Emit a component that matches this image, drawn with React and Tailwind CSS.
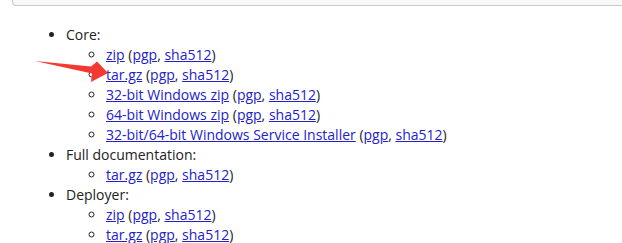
import React from 'react';

const core = [
    { label: 'zip' },
    { label: 'tar.gz' },
    { label: '32-bit Windows zip' },
    { label: '64-bit Windows zip' },
    { label: '32-bit/64-bit Windows Service Installer' },
];

const sections = [
    { title: 'Core:', items: core },
    { title: 'Full documentation:', items: [{ label: 'tar.gz' }] },
    { title: 'Deployer:', items: [{ label: 'zip' }, { label: 'tar.gz' }] },
];

function Download({ label }) {
    return (
        <li className="leading-[20px]">
            <a href="#" className="text-[#2222c8] underline">{label}</a>
            {' ('}
            <a href="#" className="text-[#2222c8] underline">pgp</a>
            {', '}
            <a href="#" className="text-[#2222c8] underline">sha512</a>
            {')'}
        </li>
    );
}

export default function App() {
    return (
        <div className="relative w-[622px] h-[243px] overflow-hidden bg-white text-[#222] text-[14px] font-['Open_Sans',sans-serif]">
            <div className="ml-3 h-[6px] border-l border-b border-[#c8c8c8] rounded-bl bg-[#f7f7f7]" />

            <ul className="list-disc pl-[66px] pt-[19px]">
                {sections.map(s => (
                    <li key={s.title} className="leading-[20px]">
                        {s.title}
                        <ul className="list-[circle] pl-[40px]">
                            {s.items.map((it, i) => <Download key={i} label={it.label} />)}
                        </ul>
                    </li>
                ))}
            </ul>

            {/* red annotation arrow */}
            <svg className="absolute left-0 top-0" width="622" height="243" viewBox="0 0 622 243">
                <polygon points="35,61 91,66.5 97,61.5 108,73 91,82 92,73.5" fill="#f23a32" />
            </svg>
        </div>
    );
}
